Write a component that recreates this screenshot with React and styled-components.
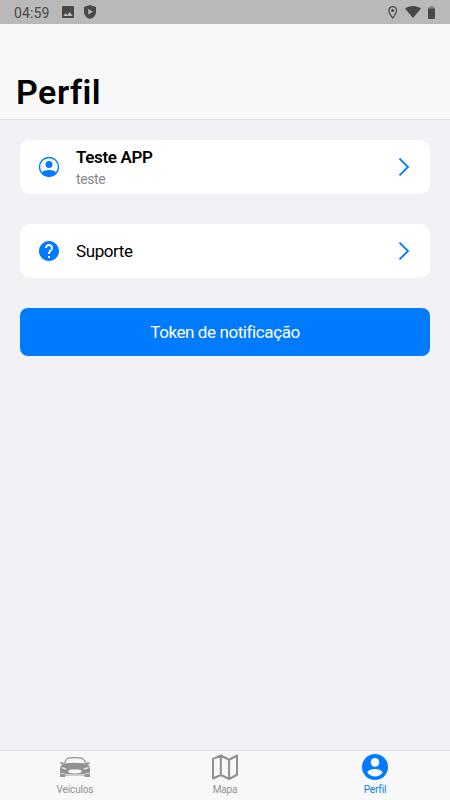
import styled, { createGlobalStyle } from "styled-components";
import { MdHelp, MdImage } from "react-icons/md";

const GlobalStyle = createGlobalStyle`
  * {
    box-sizing: border-box;
  }
  body {
    margin: 0;
    font-family: Roboto, "Liberation Sans", sans-serif;
  }
`;

const Screen = styled.div`
  display: flex;
  flex-direction: column;
  width: 450px;
  height: 800px;
  overflow: hidden;
  background: #f2f1f6;
`;

const StatusBar = styled.div`
  display: flex;
  align-items: center;
  height: 24px;
  padding: 0 15px 0 14px;
  background: #b9b9b9;
  color: #484848;
`;

const Clock = styled.span`
  width: 46px;
  font-size: 14px;
  line-height: 24px;
  letter-spacing: 0.1px;
  padding-top: 2px;
`;

const StatusGroup = styled.div`
  display: flex;
  align-items: center;
  gap: ${(props) => props.$gap || 0}px;
  margin-left: ${(props) => (props.$right ? "auto" : "0")};
  svg {
    display: block;
  }
`;

const Header = styled.header`
  display: flex;
  align-items: flex-end;
  height: 96px;
  padding: 0 16px 7px;
  background: #f8f8f8;
  border-bottom: 1px solid #dfdfe1;
`;

const Title = styled.h1`
  margin: 0;
  font-size: 34px;
  line-height: 40px;
  font-weight: 600;
  letter-spacing: 0.5px;
  color: #000;
`;

const Content = styled.main`
  flex: 1;
  display: flex;
  flex-direction: column;
  gap: 30px;
  padding: 20px;
`;

const Card = styled.div`
  display: flex;
  align-items: center;
  height: 54px;
  padding: 0 20px 0 17px;
  border-radius: 10px;
  background: #fff;
  color: #007aff;
  svg {
    display: block;
    flex: none;
  }
`;

const CardText = styled.div`
  flex: 1;
  display: flex;
  flex-direction: column;
  padding-left: 15px;
`;

const CardTitle = styled.span`
  font-size: 17px;
  line-height: 20px;
  letter-spacing: ${(props) => (props.$bold ? "-0.35px" : "-0.41px")};
  font-weight: ${(props) => (props.$bold ? 600 : 400)};
  color: #000;
`;

const CardSubtitle = styled.span`
  margin-top: 3px;
  padding-top: 1px;
  font-size: 14px;
  line-height: 16px;
  letter-spacing: -0.41px;
  color: #88888c;
`;

const Button = styled.button`
  height: 48px;
  border: 0;
  border-radius: 8px;
  background: #007aff;
  color: #fff;
  font-family: inherit;
  font-size: 17px;
  letter-spacing: -0.41px;
`;

const TabBar = styled.nav`
  display: grid;
  grid-template-columns: repeat(3, 1fr);
  height: 50px;
  background: #f8f8f8;
  border-top: 1px solid #dfdfe1;
`;

const Tab = styled.div`
  display: flex;
  flex-direction: column;
  align-items: center;
  padding-top: 2px;
  color: ${(props) => (props.$active ? "#007aff" : "#929292")};
  svg {
    display: block;
  }
`;

const TabLabel = styled.span`
  margin-top: 2px;
  font-size: 10px;
  line-height: 13px;
  letter-spacing: -0.15px;
`;

const ShieldIcon = () => (
  <svg width="12" height="14" viewBox="0 0 12 14">
    <path
      fill="currentColor"
      fillRule="evenodd"
      d="M6 0 12 2v4.800C12 10.200 9.600 13 6 14 2.400 13 0 10.200 0 6.800V2ZM4.200 3.900v5.600L9 6.700Z"
    />
  </svg>
);

const PinIcon = () => (
  <svg width="10" height="13" viewBox="0 0 10 13">
    <path
      d="M4.700.7C2.400.7.900 2.400.9 4.600.9 7.300 4.700 12 4.700 12S8.500 7.300 8.500 4.600C8.500 2.400 7 .7 4.700.7Z"
      fill="none"
      stroke="currentColor"
      strokeWidth="1.200"
    />
    <circle cx="4.700" cy="4.600" r="1.500" fill="currentColor" />
  </svg>
);

const WifiIcon = () => (
  <svg width="16" height="12" viewBox="0 0 16 12">
    <path fill="currentColor" d="M0 2.600C4.500-.8 11.500-.8 16 2.600L8 12Z" />
  </svg>
);

const BatteryIcon = () => (
  <svg width="7" height="13" viewBox="0 0 7 13">
    <path fill="#858585" d="M2 0h3v1.300h2V3H0V1.300h2Z" />
    <path fill="currentColor" d="M0 2.500h7v9.800q0 .7-.7.700H.7Q0 13 0 12.300Z" />
  </svg>
);

const UserOutlineIcon = () => (
  <svg width="24" height="24" viewBox="0 0 24 24">
    <circle cx="12" cy="12" r="9.500" fill="none" stroke="currentColor" strokeWidth="1.400" />
    <circle cx="12" cy="9.600" r="3.500" fill="currentColor" />
    <path fill="currentColor" d="M4.900 17.500C8 14.300 16 14.300 19.100 17.500 15.800 23 8.200 23 4.900 17.500Z" />
  </svg>
);

const ChevronIcon = () => (
  <svg width="12" height="20" viewBox="0 0 12 20">
    <path d="M1.500 1.700 10 10l-8.500 8.300" fill="none" stroke="currentColor" strokeWidth="1.800" />
  </svg>
);

const CarIcon = () => (
  <svg width="32" height="28" viewBox="0 0 32 28">
    <path
      fill="none"
      stroke="currentColor"
      strokeWidth="1.200"
      d="M4.800 10.800C6 8.500 7 6.500 8.400 5.400 12 4.300 20 4.300 23.600 5.400 25 6.500 26 8.500 27.200 10.800"
    />
    <path
      fill="currentColor"
      d="M4.800 10.600C12 9.500 20 9.500 27.200 10.600l.3-.7c.3-.5 2.600-1.100 3.300-.4.600.9-.7 1.500-2.600 1.600 2.100 1.300 2.800 2.700 2.800 5.300v4.800c0 2-.3 2.800-1 2.800h-3.300c-.8 0-1.200-.6-1.300-1.600H6.600C6.500 23.400 6.100 24 5.300 24H2c-.7 0-1-.8-1-2.800v-4.800c0-2.600.7-4 2.800-5.300C1.900 11 .6 10.400 1.200 9.500c.7-.7 3-.1 3.300.4Z"
    />
    <path
      fill="#f8f8f8"
      d="M2 14.200c2.300-.1 4.700.6 6.200 2-2.700.1-5.200-.2-6.200-2ZM30 14.200c-2.300-.1-4.700.6-6.200 2 2.700.1 5.200-.2 6.200-2ZM10 17C13 16.400 19 16.400 22 17c1.100.9.500 2.500-.8 3-3.200.5-7.200.5-10.400 0C9.500 19.500 8.900 17.900 10 17Z"
    />
    <path
      fill="none"
      stroke="#f8f8f8"
      strokeWidth=".7"
      d="M1 20.400c2.500 0 4 .1 5.500.9 5 .7 14 .7 19 0C27 20.500 28.500 20.400 31 20.400"
    />
  </svg>
);

const MapIcon = () => (
  <svg width="28" height="28" viewBox="0 0 28 28">
    <path
      d="M2 5.900 9.800 2.500l8.300 4.200L26 2.500v19.300l-7.900 4.200-8.300-4L2 25.500ZM9.800 2.500V22M18.100 6.700V26"
      fill="none"
      stroke="currentColor"
      strokeWidth="2.100"
      strokeLinejoin="round"
    />
  </svg>
);

const UserFilledIcon = () => (
  <svg width="28" height="28" viewBox="0 0 28 28">
    <circle cx="14" cy="14" r="13" fill="currentColor" />
    <circle cx="14" cy="9.400" r="4.300" fill="#f8f8f8" />
    <path fill="#f8f8f8" d="M6.300 19.600C7.500 16.700 11.500 16 14 16s6.500.7 7.700 3.600c-3.700 5.300-11.700 5.300-15.400 0Z" />
  </svg>
);

const ListCard = ({ icon, title, subtitle }) => (
  <Card>
    {icon}
    <CardText>
      <CardTitle $bold={!!subtitle}>{title}</CardTitle>
      {subtitle && <CardSubtitle>{subtitle}</CardSubtitle>}
    </CardText>
    <ChevronIcon />
  </Card>
);

const tabs = [
  { label: "Veículos", icon: <CarIcon /> },
  { label: "Mapa", icon: <MapIcon /> },
  { label: "Perfil", icon: <UserFilledIcon />, active: true },
];

const App = () => {
  return (
    <>
      <GlobalStyle />
      <Screen>
        <StatusBar>
          <Clock>04:59</Clock>
          <StatusGroup $gap={8}>
            <MdImage size={16} />
            <ShieldIcon />
          </StatusGroup>
          <StatusGroup $right $gap={7}>
            <PinIcon />
            <WifiIcon />
            <BatteryIcon />
          </StatusGroup>
        </StatusBar>
        <Header>
          <Title>Perfil</Title>
        </Header>
        <Content>
          <ListCard icon={<UserOutlineIcon />} title="Teste APP" subtitle="teste" />
          <ListCard icon={<MdHelp size={24} />} title="Suporte" />
          <Button>Token de notificação</Button>
        </Content>
        <TabBar>
          {tabs.map((tab) => (
            <Tab key={tab.label} $active={tab.active}>
              {tab.icon}
              <TabLabel>{tab.label}</TabLabel>
            </Tab>
          ))}
        </TabBar>
      </Screen>
    </>
  );
};

export default App;
